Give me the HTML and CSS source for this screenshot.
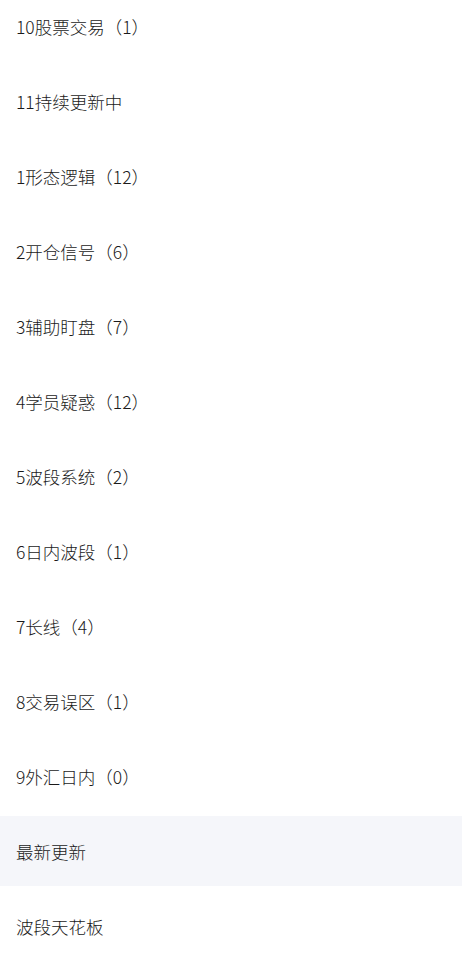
FILE: index.html
```html
<html>
<head>
	<title>分类</title>
	<meta charset="utf-8">
	<link rel="stylesheet" href="styles.css">
</head>
<body>
	<ul class="menu">
		<li class="item">10股票交易（1）</li>
		<li class="item">11持续更新中</li>
		<li class="item">1形态逻辑（12）</li>
		<li class="item">2开仓信号（6）</li>
		<li class="item">3辅助盯盘（7）</li>
		<li class="item">4学员疑惑（12）</li>
		<li class="item">5波段系统（2）</li>
		<li class="item">6日内波段（1）</li>
		<li class="item">7长线（4）</li>
		<li class="item">8交易误区（1）</li>
		<li class="item">9外汇日内（0）</li>
		<li class="item active">最新更新</li>
		<li class="item">波段天花板</li>
	</ul>
</body>
</html>
```

FILE: styles.css
```css
body{
	margin: 0;
	background: #fff;
	font-family: "Noto Sans CJK SC", "Noto Sans", sans-serif;
	color: #1a1a1a;
	overflow: hidden;
}

ul.menu{
	list-style: none;
	margin: -9px 0 0 0;
	padding: 0;
}

li.item{
	height: 70px;
	margin-bottom: 5px;
	padding-left: 16px;
	display: flex;
	align-items: center;
	font-size: 17.5px;
	font-weight: 300;
}

li.active{
	background: #f5f6fa;
}
```
